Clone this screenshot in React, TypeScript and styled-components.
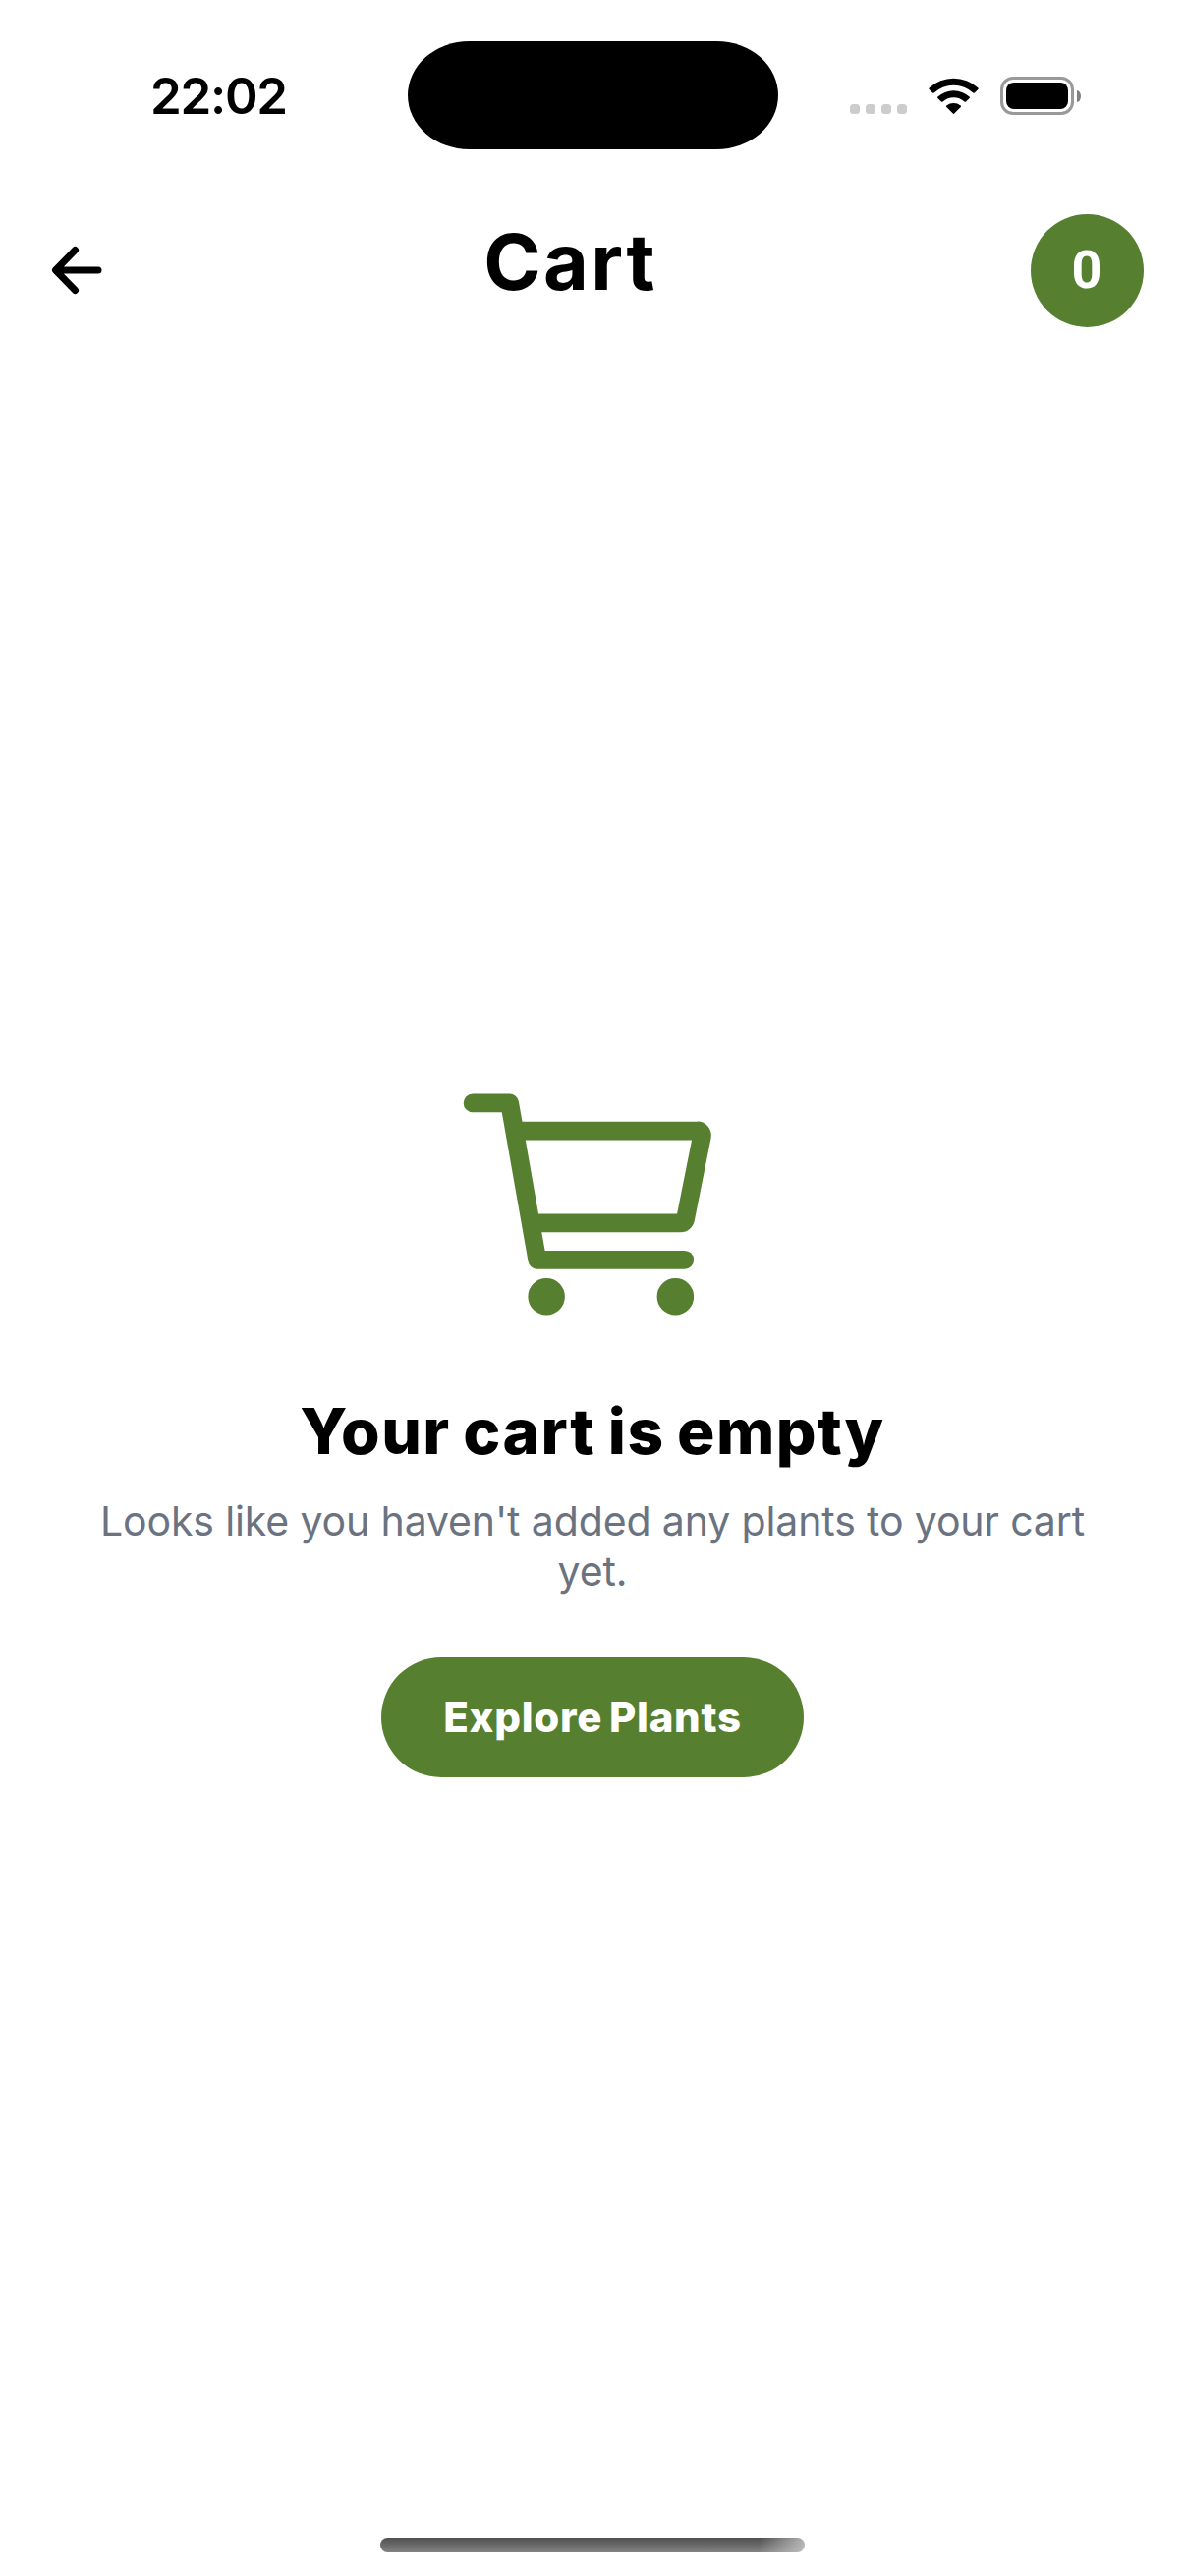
import React from "react";
import styled, { createGlobalStyle } from "styled-components";

const green = "#567f2f";

const GlobalStyle = createGlobalStyle`
  *, *::before, *::after { box-sizing: border-box; }
  body { margin: 0; background: #fff; }
`;

const Screen = styled.div`
  display: flex;
  flex-direction: column;
  width: 1206px;
  height: 2622px;
  overflow: hidden;
  background: #fff;
  color: #000;
  font-family: Inter, "Liberation Sans", sans-serif;
`;

const StatusBar = styled.div`
  display: grid;
  grid-template-columns: 414.5px 377px 1fr;
  height: 194px;
  padding-top: 41px;
`;

const Clock = styled.time`
  padding: 26px 0 0 153px;
  font-size: 51px;
  line-height: 62px;
  font-weight: 600;
  letter-spacing: -1.3px;
`;

const Island = styled.div`
  height: 110.5px;
  margin-top: 0.5px;
  border-radius: 63px / 55.25px;
  background: #000;
`;

const Indicators = styled.div`
  display: flex;
  align-items: flex-start;
  padding: 37px 0 0 73.5px;
`;

const SignalDots = styled.div`
  display: flex;
  gap: 6px;
  padding-top: 28px;
`;

const Dot = styled.span`
  width: 10px;
  height: 10px;
  border-radius: 3.5px;
  background: #ccc;
`;

const WifiIcon = styled.svg`
  width: 52px;
  height: 39px;
  margin-left: 22px;
`;

const Battery = styled.div`
  display: flex;
  align-items: center;
  margin-left: 21px;
`;

const BatteryShell = styled.div`
  width: 75px;
  height: 39px;
  padding: 3px;
  border: 3px solid #999;
  border-radius: 13px;
`;

const BatteryLevel = styled.div`
  height: 100%;
  border-radius: 8px;
  background: #000;
`;

const BatteryTip = styled.div`
  width: 4px;
  height: 12px;
  margin-left: 3px;
  border-radius: 0 4px 4px 0 / 0 6px 6px 0;
  background: #808080;
`;

const Header = styled.header`
  display: grid;
  grid-template-columns: 1fr auto 1fr;
  align-items: center;
  height: 163px;
  padding: 0 42px;
`;

const BackButton = styled.button`
  display: flex;
  padding: 0 0 2px 10px;
  border: 0;
  background: none;
`;

const Title = styled.h1`
  margin: 0 0 19px -45px;
  font-size: 79px;
  line-height: 94px;
  font-weight: 700;
  letter-spacing: 2.4px;
`;

const Badge = styled.div`
  display: flex;
  align-items: center;
  justify-content: center;
  justify-self: end;
  width: 115px;
  height: 115px;
  padding: 0 1px 1px 0;
  border-radius: 50%;
  background: ${green};
  color: #fff;
  font-family: Roboto, Inter, sans-serif;
  font-size: 54px;
  line-height: 1;
  font-weight: 700;
`;

const EmptyState = styled.main`
  display: flex;
  flex: 1;
  flex-direction: column;
  align-items: center;
  padding: 719px 96px 0;
`;

const CartIcon = styled.svg`
  width: 300px;
  height: 300px;
`;

const Heading = styled.h2`
  margin: 43px 0 0;
  font-size: 64px;
  line-height: 76px;
  font-weight: 800;
  letter-spacing: 1.5px;
  word-spacing: -3px;
  white-space: nowrap;
`;

const Message = styled.p`
  width: 1014px;
  margin: 28px 0 0;
  color: #6b7280;
  font-size: 41px;
  line-height: 51px;
  letter-spacing: -0.13px;
  text-align: center;
`;

const ExploreButton = styled.button`
  width: 430px;
  height: 122px;
  margin-top: 62px;
  padding: 0 0 2px;
  border: 0;
  border-radius: 61px;
  background: ${green};
  color: #fff;
  font-family: inherit;
  font-size: 42px;
  font-weight: 800;
  letter-spacing: 0.7px;
  word-spacing: -3px;
  white-space: nowrap;
`;

const HomeIndicator = styled.div`
  align-self: center;
  width: 432px;
  height: 15px;
  margin-bottom: 24px;
  border-radius: 8px;
  background:
    linear-gradient(100deg, rgba(200, 200, 200, 0) 89%, rgba(200, 200, 200, 0.85) 100%),
    linear-gradient(#505050, #828282);
`;

export default function App() {
  return (
    <Screen>
      <GlobalStyle />
      <StatusBar>
        <Clock>22:02</Clock>
        <Island />
        <Indicators>
          <SignalDots>
            {[0, 1, 2, 3].map((dot) => (
              <Dot key={dot} />
            ))}
          </SignalDots>
          <WifiIcon viewBox="0 0 52 39">
            <path d="M.6 11.5a36.5 36.5 0 0 1 49.8 0q.7.8 0 1.5l-3.6 3.5q-.7.7-1.5 0a29 29 0 0 0-39.6 0q-.8.7-1.5 0L.6 13q-.7-.7 0-1.5z" />
            <path d="M9.4 20.5a24 24 0 0 1 32.2 0q.7.8 0 1.5L38 25.500q-.7.7-1.500 0a16.400 16.400 0 0 0-22 0q-.8.7-1.500 0L9.400 22q-.7-.7 0-1.500z" />
            <path d="M18.300 29.400a12 12 0 0 1 14.400 0q.8.8 0 1.600l-6.500 6.600q-.7.7-1.400 0L18.300 31q-.8-.8 0-1.600z" />
          </WifiIcon>
          <Battery>
            <BatteryShell>
              <BatteryLevel />
            </BatteryShell>
            <BatteryTip />
          </Battery>
        </Indicators>
      </StatusBar>
      <Header>
        <BackButton aria-label="Back">
          <svg width="54" height="54" viewBox="0 0 54 54" fill="none" stroke="#000" strokeWidth="7" strokeLinecap="round" strokeLinejoin="round">
            <path d="M24.500 6.500 4.500 27l20 20.500M5.500 27h42.500" />
          </svg>
        </BackButton>
        <Title>Cart</Title>
        <Badge>0</Badge>
      </Header>
      <EmptyState>
        <CartIcon viewBox="0 0 512 512" fill="none" stroke={green} strokeWidth="32" strokeLinecap="round" strokeLinejoin="round">
          <circle cx="176" cy="416" r="16" />
          <circle cx="400" cy="416" r="16" />
          <path d="M48 80h64l48 272h256" />
          <path d="M160 288h249.440a8 8 0 0 0 7.850-6.430l28.800-144a8 8 0 0 0-7.850-9.570H128" />
        </CartIcon>
        <Heading>Your cart is empty</Heading>
        <Message>Looks like you haven't added any plants to your cart yet.</Message>
        <ExploreButton>Explore Plants</ExploreButton>
      </EmptyState>
      <HomeIndicator />
    </Screen>
  );
}
